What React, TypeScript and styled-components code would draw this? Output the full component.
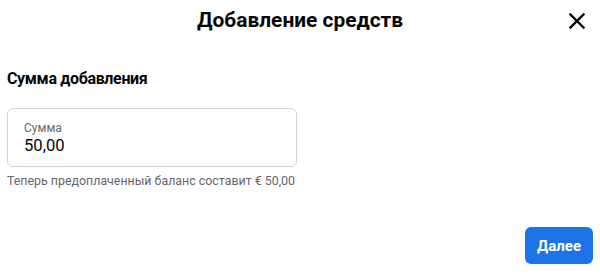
import React from "react";
import styled, { createGlobalStyle } from "styled-components";

const GlobalStyle = createGlobalStyle`
  html, body {
    margin: 0;
    padding: 0;
    background: #ffffff;
  }
  body {
    font-family: Roboto, "Liberation Sans", Arial, sans-serif;
    color: #050505;
  }
  * { box-sizing: border-box; }
`;

const Dialog = styled.div`
  width: 600px;
  height: 275px;
  display: flex;
  flex-direction: column;
  padding: 0 7px;
  background: #ffffff;
`;

const Header = styled.header`
  display: grid;
  grid-template-columns: 1fr auto 1fr;
  align-items: center;
  padding-top: 8px;
`;

const Title = styled.h1`
  grid-column: 2;
  margin: 0;
  font-size: 20.9px;
  line-height: 25px;
  font-weight: 700;
  color: #050505;
  text-align: center;
`;

const CloseButton = styled.button`
  grid-column: 3;
  justify-self: end;
  margin-right: 8px;
  width: 16px;
  height: 16px;
  padding: 0;
  border: none;
  background: transparent;
  display: flex;
  align-items: center;
  justify-content: center;
  cursor: pointer;
  color: #050505;
`;

const SectionTitle = styled.h2`
  margin: 36px 0 0;
  font-size: 16px;
  line-height: 20px;
  letter-spacing: -0.35px;
  font-weight: 700;
  color: #050505;
`;

const Field = styled.label`
  margin-top: 19px;
  width: 290px;
  height: 59px;
  border: 1px solid #ced0d4;
  border-radius: 6px;
  padding: 11px 16px 10px;
  display: flex;
  flex-direction: column;
`;

const FieldLabel = styled.span`
  font-size: 12px;
  line-height: 16px;
  color: #65676b;
`;

const FieldValue = styled.span`
  font-size: 16.6px;
  line-height: 20px;
  color: #050505;
`;

const Helper = styled.p`
  margin: 6px 0 0;
  font-size: 12.4px;
  line-height: 16px;
  color: #65676b;
`;

const Footer = styled.footer`
  margin-top: 38px;
  display: flex;
  justify-content: flex-end;
`;

const PrimaryButton = styled.button`
  height: 37px;
  padding: 0 12px;
  border: none;
  border-radius: 6px;
  background: #1b74e4;
  color: #ffffff;
  font-family: Roboto, "Liberation Sans", Arial, sans-serif;
  font-size: 15px;
  font-weight: 700;
  cursor: pointer;
`;

export default function App() {
  return (
    <>
      <GlobalStyle />
      <Dialog>
        <Header>
          <Title>Добавление средств</Title>
          <CloseButton aria-label="Закрыть">
            <svg width="16" height="16" viewBox="0 0 16 16">
              <path
                d="M1.5 1.5 L14.5 14.5 M14.5 1.5 L1.5 14.5"
                stroke="currentColor"
                strokeWidth="2.4"
                strokeLinecap="square"
              />
            </svg>
          </CloseButton>
        </Header>
        <SectionTitle>Сумма добавления</SectionTitle>
        <Field>
          <FieldLabel>Сумма</FieldLabel>
          <FieldValue>50,00</FieldValue>
        </Field>
        <Helper>Теперь предоплаченный баланс составит € 50,00</Helper>
        <Footer>
          <PrimaryButton>Далее</PrimaryButton>
        </Footer>
      </Dialog>
    </>
  );
}
